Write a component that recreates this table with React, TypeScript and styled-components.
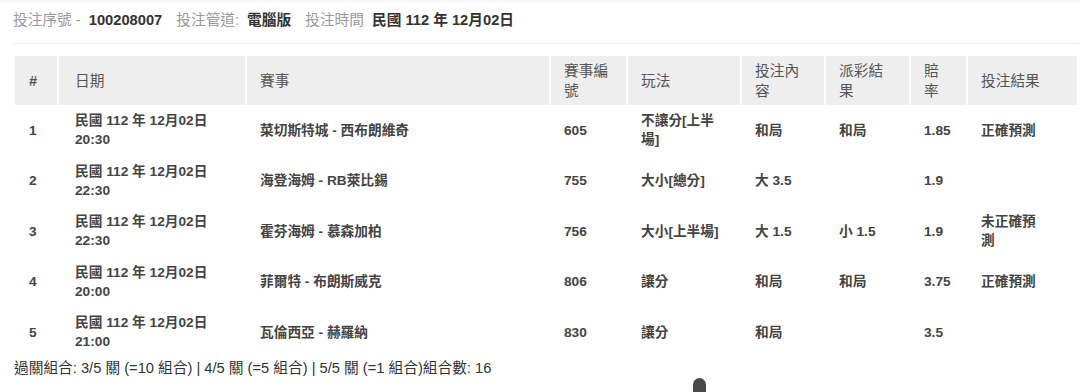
import React from 'react'
import styled, { createGlobalStyle } from 'styled-components'

const GlobalStyle = createGlobalStyle`
    html, body {
        margin: 0;
        padding: 0;
        background: #ffffff;
    }
    body {
        font-family: 'Liberation Sans', Arial, 'Noto Sans CJK TC', sans-serif;
    }
`

interface Column {
    title: string
    width: number
    padLeft?: number
    padRight?: number
    bold?: boolean
}

const columns: Column[] = [
    { title: '#', width: 42, padLeft: 14, bold: true },
    { title: '日期', width: 186, padLeft: 16 },
    { title: '賽事', width: 302 },
    { title: '賽事編號', width: 75 },
    { title: '玩法', width: 112 },
    { title: '投注內容', width: 82 },
    { title: '派彩結果', width: 83 },
    { title: '賠率', width: 55 },
    { title: '投注結果', width: 109, padRight: 34 },
]

interface Bet {
    date: string
    time: string
    match: string
    code: string
    play: string
    pick: string
    payout: string
    odds: string
    result: string
}

const bets: Bet[] = [
    {
        date: '民國 112 年 12月02日',
        time: '20:30',
        match: '菜切斯特城 - 西布朗維奇',
        code: '605',
        play: '不讓分[上半場]',
        pick: '和局',
        payout: '和局',
        odds: '1.85',
        result: '正確預測',
    },
    {
        date: '民國 112 年 12月02日',
        time: '22:30',
        match: '海登海姆 - RB萊比錫',
        code: '755',
        play: '大小[總分]',
        pick: '大 3.5',
        payout: '',
        odds: '1.9',
        result: '',
    },
    {
        date: '民國 112 年 12月02日',
        time: '22:30',
        match: '霍芬海姆 - 慕森加柏',
        code: '756',
        play: '大小[上半場]',
        pick: '大 1.5',
        payout: '小 1.5',
        odds: '1.9',
        result: '未正確預測',
    },
    {
        date: '民國 112 年 12月02日',
        time: '20:00',
        match: '菲爾特 - 布朗斯威克',
        code: '806',
        play: '讓分',
        pick: '和局',
        payout: '和局',
        odds: '3.75',
        result: '正確預測',
    },
    {
        date: '民國 112 年 12月02日',
        time: '21:00',
        match: '瓦倫西亞 - 赫羅納',
        code: '830',
        play: '讓分',
        pick: '和局',
        payout: '',
        odds: '3.5',
        result: '',
    },
]

export default function App() {
    return (
        <>
            <GlobalStyle />
            <Page>
                <InfoBar>
                    <InfoItem>
                        <InfoLabel>投注序號 -</InfoLabel>
                        <InfoValue>100208007</InfoValue>
                    </InfoItem>
                    <InfoItem>
                        <InfoLabel>投注管道:</InfoLabel>
                        <InfoValue>電腦版</InfoValue>
                    </InfoItem>
                    <InfoItem>
                        <InfoLabel>投注時間</InfoLabel>
                        <InfoValue>民國 112 年 12月02日</InfoValue>
                    </InfoItem>
                </InfoBar>
                <Rule />
                <BetTable>
                    <thead>
                        <tr>
                            {columns.map((col) => (
                                <HeadCell
                                    key={col.title}
                                    $width={col.width}
                                    $padLeft={col.padLeft}
                                    $padRight={col.padRight}
                                    $bold={col.bold}
                                >
                                    {col.title}
                                </HeadCell>
                            ))}
                        </tr>
                    </thead>
                    <tbody>
                        {bets.map((bet, i) => {
                            const cells = [
                                String(i + 1),
                                <>
                                    {bet.date}
                                    <br />
                                    {bet.time}
                                </>,
                                bet.match,
                                bet.code,
                                bet.play,
                                bet.pick,
                                bet.payout,
                                bet.odds,
                                bet.result,
                            ]
                            return (
                                <tr key={i}>
                                    {cells.map((content, j) => (
                                        <BodyCell
                                            key={j}
                                            $padLeft={columns[j].padLeft}
                                            $padRight={columns[j].padRight}
                                        >
                                            {content}
                                        </BodyCell>
                                    ))}
                                </tr>
                            )
                        })}
                    </tbody>
                </BetTable>
                <Summary>
                    過關組合: 3/5 關 (=10 組合) | 4/5 關 (=5 組合) | 5/5 關 (=1
                    組合)組合數: 16
                </Summary>
                <ScrollHandle />
            </Page>
        </>
    )
}

const Page = styled.div`
    position: relative;
    width: 1080px;
    height: 392px;
    box-sizing: border-box;
    padding: 10px 1px 0 13px;
    overflow: hidden;
    box-shadow: inset 0 5px 5px -5px rgba(0, 0, 0, 0.08);
`

const InfoBar = styled.div`
    display: flex;
    align-items: center;
    gap: 14px;
    height: 20px;
    font-size: 14.7px;
    line-height: 20px;
`

const InfoItem = styled.div`
    display: flex;
    gap: 8px;
    white-space: nowrap;
`

const InfoLabel = styled.span`
    color: #999999;
`

const InfoValue = styled.span`
    color: #333333;
    font-weight: bold;
`

const Rule = styled.hr`
    margin: 13px 0 0 0;
    border: 0;
    border-top: 1px solid #eeeeee;
    height: 0;
`

const BetTable = styled.table`
    width: 100%;
    margin-top: 12px;
    table-layout: fixed;
    border-collapse: separate;
    border-spacing: 2px 0;
`

type CellProps = { $padLeft?: number; $padRight?: number }

const HeadCell = styled.th<CellProps & { $width: number; $bold?: boolean }>`
    width: ${({ $width }) => $width}px;
    box-sizing: border-box;
    padding: 4.5px ${({ $padRight }) => $padRight ?? 16}px 4.5px
        ${({ $padLeft }) => $padLeft ?? 13}px;
    background: #eeeeee;
    color: #555555;
    font-size: 14.7px;
    line-height: 20px;
    font-weight: ${({ $bold }) => ($bold ? 'bold' : 'normal')};
    text-align: left;
    vertical-align: middle;
`

const BodyCell = styled.td<CellProps>`
    box-sizing: border-box;
    padding: 6px ${({ $padRight }) => $padRight ?? 16}px 6.5px
        ${({ $padLeft }) => $padLeft ?? 13}px;
    color: #444444;
    font-size: 13.7px;
    line-height: 19px;
    font-weight: bold;
    text-align: left;
    vertical-align: middle;
`

const Summary = styled.div`
    margin-left: 1px;
    color: #333333;
    font-size: 14.7px;
    line-height: 20px;
    white-space: nowrap;
`

const ScrollHandle = styled.div`
    position: absolute;
    left: 693px;
    top: 378px;
    width: 13px;
    height: 24px;
    border-radius: 6.5px;
    background: #484848;
`
